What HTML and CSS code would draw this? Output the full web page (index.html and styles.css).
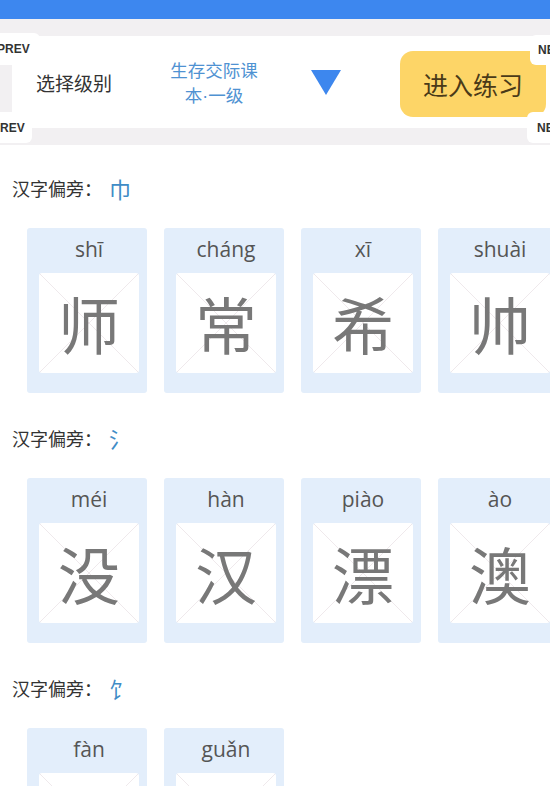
FILE: index.html
```html
<!DOCTYPE html>
<html lang="zh">
<head>
<meta charset="utf-8">
<title>汉字偏旁</title>
<link rel="stylesheet" href="styles.css">
</head>
<body>
<div class="page">
  <div class="topbar"></div>
  <div class="header-wrap">
    <div class="header">
      <span class="label">选择级别</span>
      <span class="level">生存交际课<br>本<span class="dot">·</span>一级</span>
      <span class="tri"></span>
      <button class="go">进入练习</button>
    </div>
    <div class="badge badge-prev-top">PREV</div>
    <div class="badge badge-prev-bot">PREV</div>
    <div class="badge badge-next-top">NEXT</div>
    <div class="badge badge-next-bot">NEXT</div>
  </div>

  <section class="section">
    <div class="title">汉字偏旁：<span class="radical">巾</span></div>
    <div class="cards">
      <div class="card"><div class="py">shī</div><div class="grid"><span class="ch">师</span></div></div>
      <div class="card"><div class="py">cháng</div><div class="grid"><span class="ch">常</span></div></div>
      <div class="card"><div class="py">xī</div><div class="grid"><span class="ch">希</span></div></div>
      <div class="card"><div class="py">shuài</div><div class="grid"><span class="ch">帅</span></div></div>
    </div>
  </section>

  <section class="section">
    <div class="title">汉字偏旁：<span class="radical">氵</span></div>
    <div class="cards">
      <div class="card"><div class="py">méi</div><div class="grid"><span class="ch">没</span></div></div>
      <div class="card"><div class="py">hàn</div><div class="grid"><span class="ch">汉</span></div></div>
      <div class="card"><div class="py">piào</div><div class="grid"><span class="ch">漂</span></div></div>
      <div class="card"><div class="py">ào</div><div class="grid"><span class="ch">澳</span></div></div>
    </div>
  </section>

  <section class="section">
    <div class="title">汉字偏旁：<span class="radical">饣</span></div>
    <div class="cards">
      <div class="card"><div class="py">fàn</div><div class="grid"><span class="ch">饭</span></div></div>
      <div class="card"><div class="py">guǎn</div><div class="grid"><span class="ch">馆</span></div></div>
    </div>
  </section>
</div>
</body>
</html>
```
FILE: styles.css
```css
* { box-sizing: border-box; }
html, body {
  margin: 0;
  padding: 0;
  background: #ffffff;
}
body {
  font-family: "Noto Sans CJK SC", "Noto Sans", sans-serif;
  color: #333;
}
.page {
  width: 550px;
  height: 786px;
  overflow: hidden;
}
.topbar {
  height: 19px;
  background: #3d87ef;
}
.header-wrap {
  position: relative;
  background: #f2f0f2;
  padding: 17px 0 17px 12px;
}
.header {
  height: 92px;
  background: #ffffff;
  display: flex;
  align-items: center;
  padding-left: 24px;
}
.label {
  font-size: 19px;
  color: #333;
  line-height: 1;
}
.level {
  margin-left: 50px;
  width: 104px;
  text-align: center;
  font-size: 17.5px;
  line-height: 25px;
  color: #4f92d2;
  margin-top: 2px;
  white-space: nowrap;
}
.dot {
  font-family: "Liberation Sans", Arial, sans-serif;
}
.tri {
  margin-left: 45px;
  width: 0;
  height: 0;
  border-left: 15px solid transparent;
  border-right: 15px solid transparent;
  border-top: 25px solid #3d87ee;
}
.go {
  margin-left: 59px;
  width: 146px;
  height: 66px;
  border: none;
  border-radius: 13px;
  background: #fdd567;
  color: #4a3a18;
  font-family: "Noto Sans CJK SC", sans-serif;
  font-size: 25px;
  padding: 0;
  margin-top: 4px;
}
.badge {
  position: absolute;
  background: #ffffff;
  border-radius: 6px;
  font-family: "Liberation Sans", Arial, sans-serif;
  font-weight: bold;
  font-size: 12px;
  color: #333;
  display: flex;
  align-items: center;
  white-space: nowrap;
  overflow: hidden;
}
.badge-prev-top {
  left: -12px;
  top: 14px;
  width: 52px;
  height: 32px;
  padding-left: 9px;
}
.badge-prev-bot {
  left: -12px;
  top: 93px;
  width: 44px;
  height: 31px;
  padding-left: 4px;
}
.badge-next-top {
  left: 530px;
  top: 16px;
  width: 30px;
  height: 30px;
  padding-left: 8px;
}
.badge-next-bot {
  left: 527px;
  top: 93px;
  width: 30px;
  height: 31px;
  padding-left: 10px;
}
.section {
  padding-top: 31px;
}
.section + .section {
  padding-top: 33px;
}
.title {
  height: 24px;
  padding-left: 12px;
  display: flex;
  align-items: center;
  font-size: 18px;
  color: #333;
}
.radical {
  font-size: 22px;
  color: #3f8cc6;
  margin-left: 7px;
}
.cards {
  margin-top: 28px;
  padding-left: 27px;
  display: flex;
  gap: 17px;
}
.card {
  flex: 0 0 120px;
  height: 165px;
  background: #e3eefb;
  border-radius: 3px;
  padding: 0 8px 0 12px;
}
.py {
  height: 45px;
  display: flex;
  align-items: center;
  justify-content: center;
  font-family: "Open Sans", "Noto Sans", sans-serif;
  font-size: 21px;
  color: #555;
  padding-bottom: 4px;
}
.grid {
  width: 100px;
  height: 100px;
  background-color: #ffffff;
  background-image:
    linear-gradient(to bottom right, transparent calc(50% - 0.6px), #efe9ec 50%, transparent calc(50% + 0.6px)),
    linear-gradient(to bottom left, transparent calc(50% - 0.6px), #efe9ec 50%, transparent calc(50% + 0.6px)),
    linear-gradient(to right, transparent 49.5px, #efeaed 49.5px, #efeaed 50.5px, transparent 50.5px),
    linear-gradient(to bottom, transparent 49.5px, #efeaed 49.5px, #efeaed 50.5px, transparent 50.5px);
  border-radius: 3px;
  display: flex;
  align-items: center;
  justify-content: center;
}
.ch {
  font-family: "Noto Sans CJK SC", sans-serif;
  font-weight: 400;
  font-size: 62px;
  line-height: 1;
  color: #787878;
}
```
